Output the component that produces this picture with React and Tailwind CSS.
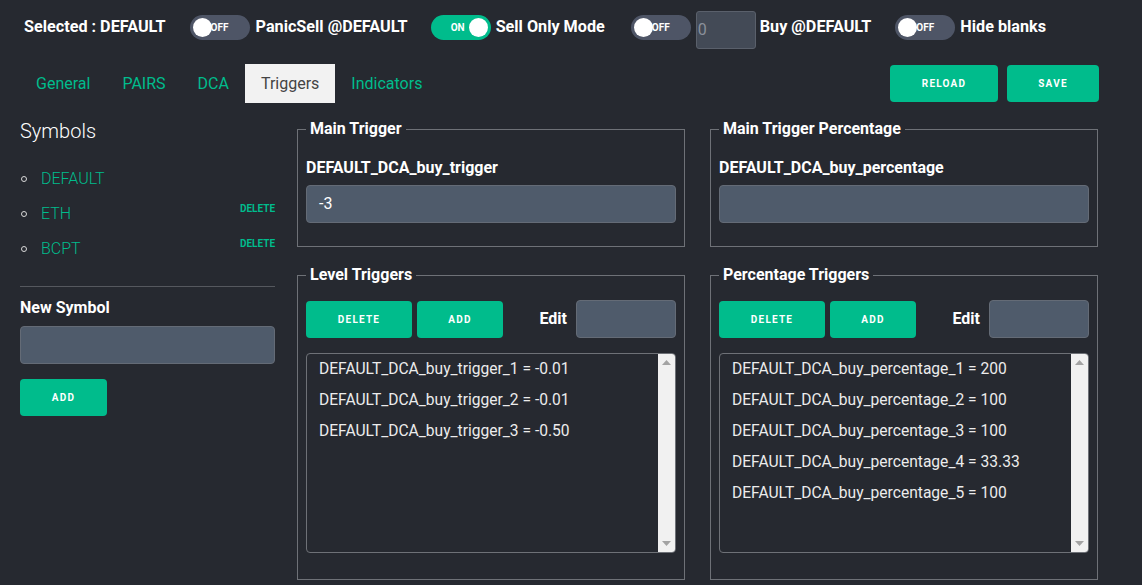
import React from "react";

const FONT = { fontFamily: "Roboto, 'Noto Sans', sans-serif" };

const TABS = ["General", "PAIRS", "DCA", "Triggers", "Indicators"];

const SYMBOLS = [
  { name: "DEFAULT", removable: false },
  { name: "ETH", removable: true },
  { name: "BCPT", removable: true },
];

const LEVELS = [
  "DEFAULT_DCA_buy_trigger_1 = -0.01",
  "DEFAULT_DCA_buy_trigger_2 = -0.01",
  "DEFAULT_DCA_buy_trigger_3 = -0.50",
];

const PERCENTS = [
  "DEFAULT_DCA_buy_percentage_1 = 200",
  "DEFAULT_DCA_buy_percentage_2 = 100",
  "DEFAULT_DCA_buy_percentage_3 = 100",
  "DEFAULT_DCA_buy_percentage_4 = 33.33",
  "DEFAULT_DCA_buy_percentage_5 = 100",
];

// toggle pill: knob left when off, right when on
function Toggle({ on }) {
  return (
    <div
      className={`flex h-[25px] w-[60px] items-center rounded-full px-[3px] ${
        on ? "bg-[#00bc8c] justify-end" : "bg-[#4e5566]"
      }`}
    >
      {on ? (
        <>
          <span className="mr-[4px] text-[10px] font-bold text-white">ON</span>
          <span className="h-[19px] w-[19px] rounded-full bg-white" />
        </>
      ) : (
        <>
          <span className="h-[19px] w-[19px] rounded-full bg-white" />
          <span className="ml-[-1px] text-[10px] font-bold text-white">OFF</span>
        </>
      )}
    </div>
  );
}

function Btn({ label, w }) {
  return (
    <button
      className={`${w} flex h-[37px] items-center justify-center rounded-[4px] bg-[#00bc8c] text-[10px] font-bold tracking-[1.2px] text-white`}
    >
      {label}
    </button>
  );
}

function Field({ value = "", className = "" }) {
  return (
    <div
      className={`flex h-[38px] items-center rounded-[4px] border border-[#646b76] bg-[#4f5b6b] px-3 text-[16px] text-white ${className}`}
    >
      {value}
    </div>
  );
}

function Box({ title, children, className = "" }) {
  return (
    <fieldset className={`border border-[#6e7177] px-2 ${className}`}>
      <legend className="px-1 text-[16px] font-bold leading-[18px] text-white">{title}</legend>
      {children}
    </fieldset>
  );
}

function ListBox({ items }) {
  return (
    <div className="flex h-[200px] overflow-hidden rounded-[4px] border border-[#6e7177]">
      <div className="flex-1">
        {items.map((t) => (
          <div key={t} className="flex h-[31px] items-center pl-3 text-[15.6px] text-[#ececec]">
            {t}
          </div>
        ))}
      </div>
      <div className="flex w-[17px] flex-col items-center justify-between bg-[#f1f1f1] py-[6px]">
        <svg width="9" height="5" viewBox="0 0 9 5">
          <path d="M0 5 L4.5 0 L9 5 Z" fill="#a3a3a3" />
        </svg>
        <svg width="9" height="5" viewBox="0 0 9 5">
          <path d="M0 0 L4.5 5 L9 0 Z" fill="#a3a3a3" />
        </svg>
      </div>
    </div>
  );
}

function TriggerColumn({ main, mainLabel, mainValue, levels, levelsTitle }) {
  return (
    <div className="flex w-[388px] flex-col">
      <Box title={main} className="pb-[23px]">
        <div className="mt-[21px] text-[16px] font-bold leading-[18px] text-white">{mainLabel}</div>
        <Field value={mainValue} className="mt-[8px]" />
      </Box>
      <Box title={levelsTitle} className="mt-[19px] pb-[26px]">
        <div className="mt-[16px] flex items-center">
          <Btn label="DELETE" w="w-[106px]" />
          <div className="ml-[5px]">
            <Btn label="ADD" w="w-[86px]" />
          </div>
          <span className="ml-auto mr-[9px] text-[16px] font-bold text-white">Edit</span>
          <Field className="w-[100px]" />
        </div>
        <div className="mt-[15px]">
          <ListBox items={levels} />
        </div>
      </Box>
    </div>
  );
}

export default function App() {
  return (
    <div className="h-[585px] w-[1142px] overflow-hidden bg-[#262930]" style={FONT}>
      {/* top controls */}
      <div className="flex items-center pl-6 pt-[6px] text-[16.2px] font-bold text-white">
        <span>Selected : DEFAULT</span>
        <div className="ml-[24px]"><Toggle /></div>
        <span className="ml-[6px]">PanicSell @DEFAULT</span>
        <div className="ml-[23px]"><Toggle on /></div>
        <span className="ml-[5px]">Sell Only Mode</span>
        <div className="ml-[26px]"><Toggle /></div>
        <div className="ml-[5px] mt-[5px] flex h-[38px] w-[60px] items-center rounded-[3px] border border-[#5a606b] bg-[#434a56] pl-[1px] text-[16px] font-normal text-[#8a909b]">
          0
        </div>
        <span className="ml-[4px]">Buy @DEFAULT</span>
        <div className="ml-[24px]"><Toggle /></div>
        <span className="ml-[5px]">Hide blanks</span>
      </div>

      <div className="ml-5 w-[1079px]">
        {/* tabs + actions */}
        <div className="mt-[15px] flex items-center">
          <div className="flex h-[39px]">
            {TABS.map((t) => (
              <div
                key={t}
                className={`flex items-center px-4 text-[16px] ${
                  t === "Triggers" ? "bg-[#f2f2f2] text-[#444]" : "text-[#00bc8c]"
                }`}
              >
                {t}
              </div>
            ))}
          </div>
          <div className="ml-auto flex gap-[9px]">
            <Btn label="RELOAD" w="w-[108px]" />
            <Btn label="SAVE" w="w-[92px]" />
          </div>
        </div>

        <div className="mt-[16px] flex">
          {/* symbols */}
          <div className="w-[255px]">
            <div className="text-[20px] font-light leading-[24px] text-white">Symbols</div>
            <ul className="mt-[25px]">
              {SYMBOLS.map((s) => (
                <li key={s.name} className="flex h-[35px] items-start">
                  <span className="mt-[8px] ml-[1px] h-[6px] w-[6px] rounded-full border border-[#d8d8d8]" />
                  <span className="ml-[14px] text-[16px] font-light leading-[22px] text-[#00bc8c]">{s.name}</span>
                  {s.removable && (
                    <span className="ml-auto text-[10px] font-bold leading-[12px] text-[#00bc8c]">
                      DELETE
                    </span>
                  )}
                </li>
              ))}
            </ul>
            <div className="mt-[13px] h-px bg-[#55585e]" />
            <div className="mt-[12px] text-[16px] font-bold leading-[18px] text-white">New Symbol</div>
            <Field className="mt-[9px]" />
            <div className="mt-[15px]">
              <Btn label="ADD" w="w-[87px]" />
            </div>
          </div>

          <div className="ml-[22px] mt-[1px]">
            <TriggerColumn
              main="Main Trigger"
              mainLabel="DEFAULT_DCA_buy_trigger"
              mainValue="-3"
              levelsTitle="Level Triggers"
              levels={LEVELS}
            />
          </div>
          <div className="ml-[25px] mt-[1px]">
            <TriggerColumn
              main="Main Trigger Percentage"
              mainLabel="DEFAULT_DCA_buy_percentage"
              levelsTitle="Percentage Triggers"
              levels={PERCENTS}
            />
          </div>
        </div>
      </div>
    </div>
  );
}
